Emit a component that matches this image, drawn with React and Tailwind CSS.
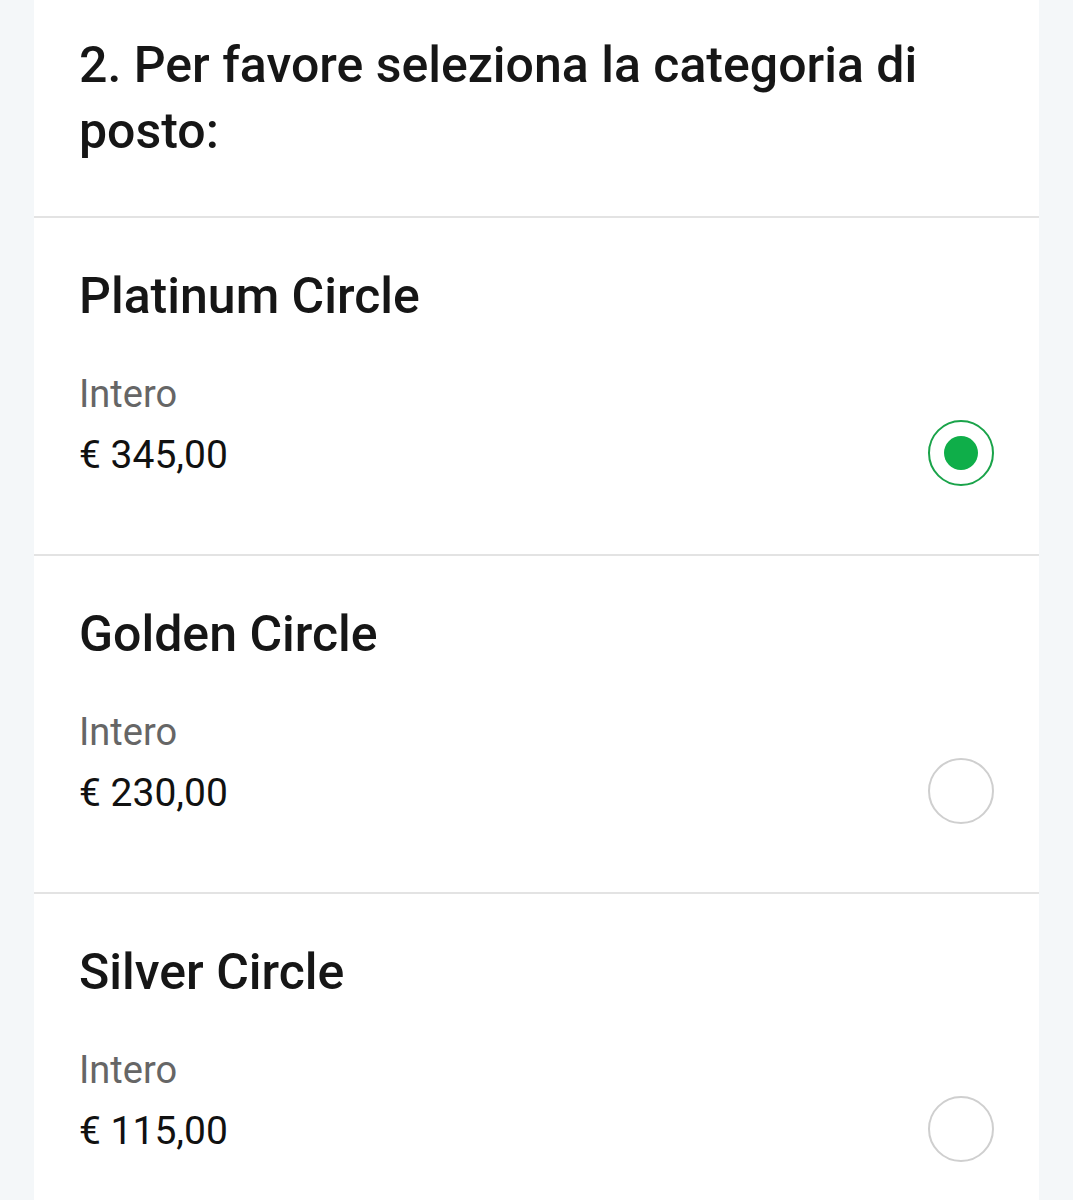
const options = [
  { name: 'Platinum Circle', label: 'Intero', price: '€ 345,00', selected: true },
  { name: 'Golden Circle', label: 'Intero', price: '€ 230,00', selected: false },
  { name: 'Silver Circle', label: 'Intero', price: '€ 115,00', selected: false },
]

function Radio({ checked }) {
  return (
    <div className={`w-[66px] h-[66px] rounded-full border-2 flex items-center justify-center shrink-0 ${checked ? 'border-[#1aa34a]' : 'border-[#cfcfcf]'}`}>
      {checked && <div className="w-[34px] h-[34px] rounded-full bg-[#0fae49]" />}
    </div>
  )
}

export default function App() {
  return (
    <div className="min-h-[1200px] bg-[#f4f7f9] px-[34px] font-['Roboto',sans-serif] text-[#161616]">
      <div className="bg-white min-h-[1200px]">
        <div className="px-[45px] pt-[32px] h-[218px] border-b-2 border-[#e3e3e3]">
          <h2 className="text-[50px] leading-[66px] font-medium">2. Per favore seleziona la categoria di posto:</h2>
        </div>
        {options.map((o) => (
          <div key={o.name} className="h-[338px] pl-[45px] pr-[45px] pt-[45px] border-b-2 border-[#e3e3e3]">
            <h3 className="text-[50px] leading-[66px] font-medium">{o.name}</h3>
            <div className="flex items-end justify-between mt-[38px]">
              <div>
                <div className="text-[38px] leading-[54px] text-[#666]">{o.label}</div>
                <div className="text-[39px] leading-[68px] text-[#111]">{o.price}</div>
              </div>
              <div className="mb-[3px]"><Radio checked={o.selected} /></div>
            </div>
          </div>
        ))}
      </div>
    </div>
  )
}
